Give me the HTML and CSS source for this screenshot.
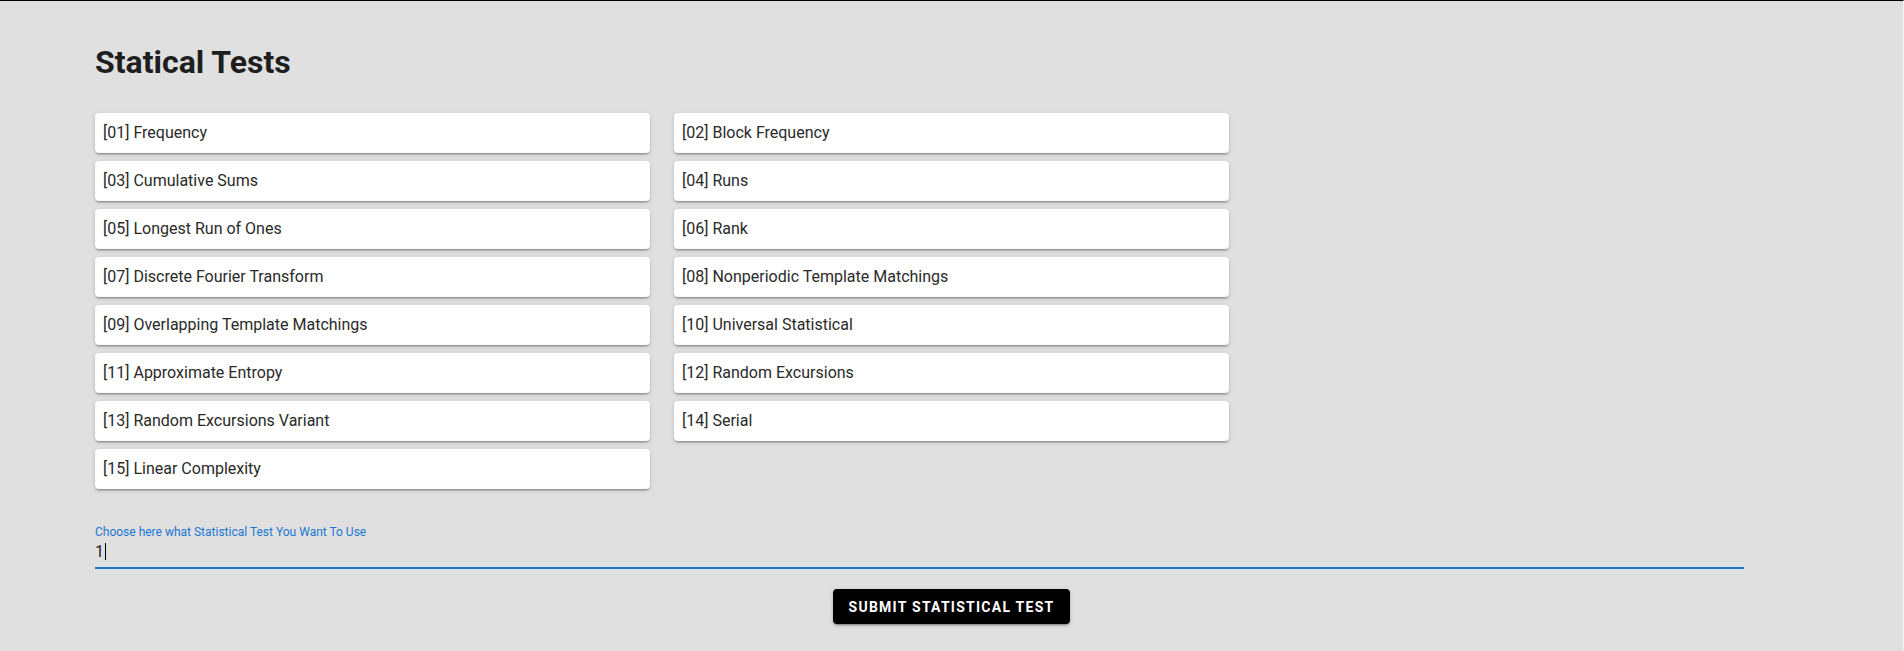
FILE: index.html
```html
<!DOCTYPE html>
<html>
<head>
<meta charset="utf-8">
<link rel="stylesheet" href="styles.css">
</head>
<body>
<div class="page">
  <h1 class="title">Statical Tests</h1>
  <div class="grid">
    <div class="card">[01] Frequency</div>
    <div class="card">[02] Block Frequency</div>
    <div class="card">[03] Cumulative Sums</div>
    <div class="card">[04] Runs</div>
    <div class="card">[05] Longest Run of Ones</div>
    <div class="card">[06] Rank</div>
    <div class="card">[07] Discrete Fourier Transform</div>
    <div class="card">[08] Nonperiodic Template Matchings</div>
    <div class="card">[09] Overlapping Template Matchings</div>
    <div class="card">[10] Universal Statistical</div>
    <div class="card">[11] Approximate Entropy</div>
    <div class="card">[12] Random Excursions</div>
    <div class="card">[13] Random Excursions Variant</div>
    <div class="card">[14] Serial</div>
    <div class="card">[15] Linear Complexity</div>
  </div>
  <div class="field">
    <label class="field-label">Choose here what Statistical Test You Want To Use</label>
    <div class="field-input"><span>1</span><span class="caret"></span></div>
  </div>
  <div class="actions">
    <button class="submit">Submit Statistical Test</button>
  </div>
</div>
</body>
</html>
```
FILE: styles.css
```css
html, body {
  margin: 0;
  padding: 0;
}
body {
  background: #e0e0e0;
  border-top: 1px solid #000;
  font-family: Roboto, "Liberation Sans", sans-serif;
  color: rgba(0, 0, 0, 0.87);
  height: 650px;
  overflow: hidden;
  box-sizing: border-box;
  border-right: 1px solid #f4f4f4;
}
.page {
  padding: 0 0 0 95px;
}
.title {
  margin: 0;
  padding-top: 44px;
  font-size: 32px;
  line-height: 34px;
  font-weight: 700;
  color: #1e1e1e;
}
.grid {
  margin-top: 34px;
  display: grid;
  grid-template-columns: 555px 555px;
  column-gap: 24px;
  row-gap: 8px;
}
.card {
  height: 40px;
  background: #fff;
  border-radius: 4px;
  box-shadow: 0px 3px 1px -2px rgba(0,0,0,0.2), 0px 2px 2px 0px rgba(0,0,0,0.14), 0px 1px 5px 0px rgba(0,0,0,0.12);
  display: flex;
  align-items: center;
  padding: 0 8px 1px;
  font-size: 16px;
  color: #2a2a2a;
  box-sizing: border-box;
}
.field {
  width: 1649px;
  margin-top: 36px;
  display: flex;
  flex-direction: column;
}
.field-label {
  font-size: 12px;
  line-height: 14px;
  color: #1976d2;
}
.field-input {
  display: flex;
  align-items: center;
  height: 25px;
  font-size: 16px;
  color: #262626;
  border-bottom: 2px solid #1976d2;
  padding-bottom: 3px;
}
.caret {
  display: inline-block;
  width: 1px;
  height: 17px;
  background: #000;
  margin-left: 1px;
}
.actions {
  display: flex;
  justify-content: center;
  width: 1713px;
  margin-top: 20px;
}
.submit {
  width: 237px;
  height: 35px;
  background: #000;
  color: #fff;
  border: none;
  border-radius: 4px;
  font-family: Roboto, "Liberation Sans", sans-serif;
  font-size: 14px;
  font-weight: 700;
  letter-spacing: 1.25px;
  text-transform: uppercase;
  box-shadow: 0px 3px 1px -2px rgba(0,0,0,0.2), 0px 2px 2px 0px rgba(0,0,0,0.14), 0px 1px 5px 0px rgba(0,0,0,0.12);
  padding: 0;
}
```
